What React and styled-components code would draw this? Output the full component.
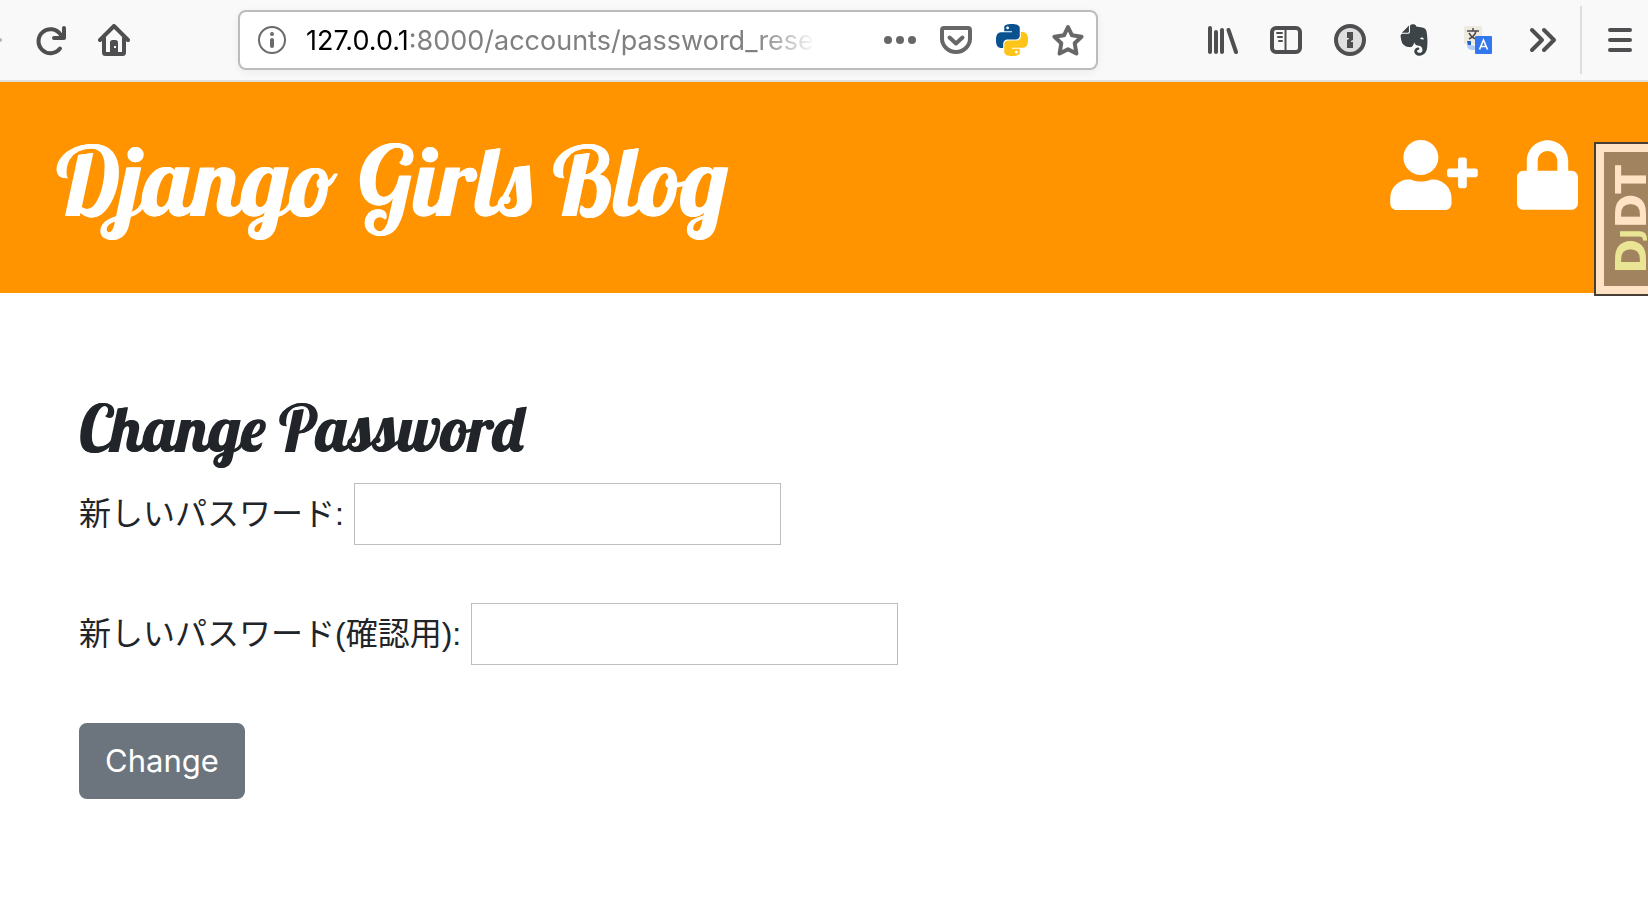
import React from "react";
import styled, { createGlobalStyle } from "styled-components";
import { FaUserPlus, FaLock, FaEvernote } from "react-icons/fa";

const GlobalStyle = createGlobalStyle`
  *, *::before, *::after { box-sizing: border-box; }
  html { overflow-x: hidden; }
  body {
    margin: 0;
    background: #fff;
    color: #212529;
    font-family: "Liberation Sans", "Noto Sans CJK JP", sans-serif;
    font-size: 32px;
    line-height: 48px;
  }
`;

const Toolbar = styled.nav`
  display: flex;
  align-items: center;
  height: 82px;
  background: #f9f9f9;
  border-bottom: 2px solid #e0e0e1;
`;

const BackEdge = styled.span`
  flex: none;
  width: 2px;
  height: 4px;
  margin-right: 16px;
  border-radius: 0 2px 2px 0;
  background: #b4b4b5;
`;

const ToolButton = styled.button`
  flex: none;
  display: flex;
  align-items: center;
  justify-content: center;
  width: ${(p) => p.$width || 64}px;
  height: 56px;
  padding: 0;
  border: 0;
  background: none;
  color: ${(p) => p.$color || "#4f4f51"};
  cursor: pointer;

  svg { display: block; width: 32px; height: 32px; }
`;

const AddressBar = styled.div`
  flex: 1;
  min-width: 0;
  display: flex;
  align-items: center;
  height: 60px;
  margin: 0 92px;
  border: 2px solid #bcbcbd;
  border-radius: 8px;
  background: #fff;
  box-shadow: 0 2px 8px rgba(0, 0, 0, 0.06);
`;

const Address = styled.div`
  flex: 1;
  min-width: 0;
  margin: 2px 56px 0 2px;
  overflow: hidden;
  white-space: nowrap;
  font-family: Inter, "Liberation Sans", sans-serif;
  font-size: 27px;
  line-height: 40px;
  color: #808080;
  mask-image: linear-gradient(to left, transparent, #000 60px);
`;

const Host = styled.span`
  color: #000;
`;

const Divider = styled.span`
  flex: none;
  width: 2px;
  height: 68px;
  margin: 0 10px 0 6px;
  background: #dededf;
`;

const PageHeader = styled.header`
  display: flex;
  justify-content: space-between;
  align-items: flex-start;
  height: 211px;
  padding: 58px 70px 0 56px;
  background: #ff9400;
`;

const SiteTitle = styled.h1`
  margin: 0;
  font-family: Lobster, "Liberation Serif", serif;
  font-size: 96px;
  font-weight: 400;
  line-height: 80px;
  text-shadow: 1px 0 0 #fff;

  a { color: #fff; text-decoration: none; }
`;

const Actions = styled.div`
  display: flex;
  gap: 39px;
`;

const ActionLink = styled.a`
  color: #fff;

  svg { display: block; width: ${(p) => p.$width}px; height: 70px; }
`;

const Main = styled.main`
  padding: 100px 79px 64px;
`;

const Heading = styled.h2`
  margin: 0 0 20px;
  font-family: Lobster, "Liberation Serif", serif;
  font-size: 64px;
  font-weight: 400;
  line-height: 70px;
  text-shadow: 1px 0 0 currentColor;
`;

const Form = styled.form`
  display: flex;
  flex-direction: column;
  align-items: flex-start;
  gap: 58px;
`;

const Field = styled.div`
  display: flex;
  align-items: center;
  gap: 10px;
`;

const PasswordInput = styled.input`
  width: 427px;
  height: 62px;
  padding: 0 8px;
  border: 1px solid #bdbdbd;
  background: #fff;
  font: inherit;
`;

const SubmitButton = styled.button`
  padding: 12px 24px;
  border: 2px solid #6c757d;
  border-radius: 8px;
  background: #6c757d;
  color: #fff;
  font-family: Inter, "Liberation Sans", sans-serif;
  font-size: 31px;
  line-height: 48px;
  cursor: pointer;
`;

const DebugHandle = styled.button`
  position: fixed;
  top: 142px;
  right: 0;
  width: 54px;
  height: 154px;
  padding: 8px 0 8px 8px;
  border: 2px solid rgba(0, 0, 0, 0.72);
  border-right: 0;
  background: #ffe3c4;
  cursor: pointer;
`;

const DebugFace = styled.span`
  display: flex;
  align-items: center;
  justify-content: flex-end;
  height: 134px;
  background: #a1845f;
  color: #ffe3c4;
`;

const DebugLabel = styled.span`
  writing-mode: vertical-rl;
  transform: rotate(180deg);
  font-family: "DejaVu Sans", sans-serif;
  font-size: 42px;
  font-weight: 700;
  line-height: 32px;
`;

const DebugAccent = styled.span`
  color: #eae595;

  small { font-size: 28px; }
`;

const stroke = {
  fill: "none",
  stroke: "currentColor",
  strokeLinecap: "round",
  strokeLinejoin: "round",
};

const ReloadIcon = () => (
  <svg viewBox="0 0 32 32" {...stroke} strokeWidth="4">
    <path d="M26 24.6A12 12 0 1 1 26.5 10.5" />
    <path d="M30 4v10H20" />
    <path d="M30 8v6h-6z" fill="currentColor" strokeWidth="1" />
  </svg>
);

const HomeIcon = () => (
  <svg viewBox="0 0 32 32" {...stroke} strokeWidth="4">
    <path d="M2 16 16 2l14 14" />
    <path d="M6 14v14.5q0 1.5 1.5 1.5h17q1.5 0 1.5-1.5V14" />
    <path fillRule="evenodd" fill="currentColor" stroke="none" d="M12 29V18.5q0-2.5 2.5-2.5h3q2.5 0 2.5 2.5V29zM16 22v2h2v-2z" />
  </svg>
);

const InfoIcon = () => (
  <svg viewBox="0 0 32 32" {...stroke} strokeWidth="2">
    <circle cx="16" cy="16" r="13" />
    <circle cx="16" cy="10" r="2" fill="currentColor" stroke="none" />
    <path d="M16 16v6" strokeWidth="4" />
  </svg>
);

const DotsIcon = () => (
  <svg viewBox="0 0 32 32" fill="currentColor">
    <circle cx="4" cy="16" r="4" />
    <circle cx="16" cy="16" r="4" />
    <circle cx="28" cy="16" r="4" />
  </svg>
);

const PocketIcon = () => (
  <svg viewBox="0 0 32 32" {...stroke} strokeWidth="4">
    <path d="M4 4h24q2 0 2 2v8.5a14 13.5 0 0 1-28 0V6q0-2 2-2z" />
    <path d="m9.5 13.5 6.5 6 6.5-6" />
  </svg>
);

const PythonIcon = () => (
  <svg viewBox="0 0 24 24">
    <path
      fill="#0a5190"
      d="M14.25.18l.9.2.73.26.59.3.45.32.34.34.25.34.16.33.1.3.04.26.02.2-.01.13V8.5l-.05.63-.13.55-.21.46-.26.38-.3.31-.33.25-.35.19-.35.14-.33.1-.3.07-.26.04-.21.02H8.77l-.69.05-.59.14-.5.22-.41.27-.33.32-.27.35-.2.36-.15.37-.1.35-.07.32-.04.27-.02.21v3.06H3.17l-.21-.03-.28-.07-.32-.12-.35-.18-.36-.26-.36-.36-.35-.46-.32-.59-.28-.73-.21-.88-.14-1.05-.05-1.23.06-1.22.16-1.04.24-.87.32-.71.36-.57.4-.44.42-.33.42-.24.4-.16.36-.1.32-.05.24-.01h.16l.06.01h8.16v-.83H6.18l-.01-2.75-.02-.37.05-.34.11-.31.17-.28.25-.26.31-.23.38-.2.44-.18.51-.15.58-.12.64-.1.71-.06.77-.04.84-.02 1.27.05zm-6.3 1.98l-.23.33-.08.41.08.41.23.34.33.22.41.09.41-.09.33-.22.23-.34.08-.41-.08-.41-.23-.33-.33-.22-.41-.09-.41.09z"
    />
    <path
      fill="#ffc41a"
      d="M21.04 6.11l.28.06.32.12.35.18.36.27.36.35.35.47.32.59.28.73.21.88.14 1.04.05 1.23-.06 1.23-.16 1.04-.24.86-.32.71-.36.57-.4.45-.42.33-.42.24-.4.16-.36.09-.32.05-.24.02-.16-.01h-8.22v.82h5.84l.01 2.76.02.36-.05.34-.11.31-.17.29-.25.25-.31.24-.38.2-.44.17-.51.15-.58.13-.64.09-.71.07-.77.04-.84.01-1.27-.04-1.07-.14-.9-.2-.73-.25-.59-.3-.45-.33-.34-.34-.25-.34-.16-.33-.1-.3-.04-.25-.02-.2.01-.13v-5.34l.05-.64.13-.54.21-.46.26-.38.3-.32.33-.24.35-.2.35-.14.33-.1.3-.06.26-.04.21-.02.13-.01h5.84l.69-.05.59-.14.5-.21.41-.28.33-.32.27-.35.2-.36.15-.36.1-.35.07-.32.04-.28.02-.21V6.07h2.09l.14.01zm-6.47 14.25l-.23.33-.08.41.08.41.23.33.33.23.41.08.41-.08.33-.23.23-.33.08-.41-.08-.41-.23-.33-.33-.23-.41-.08-.41.08z"
    />
  </svg>
);

const StarIcon = () => (
  <svg viewBox="0 0 32 32" {...stroke} strokeWidth="4">
    <path d="m16 3 4 8.3 9.5 1.4-6.8 6.5 1.7 10.3L16 25.2l-8.4 4.3 1.7-10.3-6.8-6.5 9.5-1.4z" />
  </svg>
);

const LibraryIcon = () => (
  <svg viewBox="-2 0 32 32" {...stroke} strokeWidth="4">
    <path d="M2 4v24M8 8v20M14 6v22M20.5 6 28 28" />
  </svg>
);

const SidebarIcon = () => (
  <svg viewBox="0 0 32 32" {...stroke} strokeWidth="4">
    <rect x="2" y="4" width="28" height="24" rx="4" />
    <path d="M15.5 4v24" strokeWidth="2" />
    <path d="M7 9h5M8 13h4M9 17h3" strokeWidth="2" />
  </svg>
);

const KeyholeIcon = () => (
  <svg viewBox="0 0 32 32">
    <circle cx="16" cy="16" r="14" fill="#dfdfdf" stroke="currentColor" strokeWidth="4" />
    <path d="M13 8h6v8l-2 1v1h2v6h-6v-8l2-1v-1h-2z" fill="currentColor" />
  </svg>
);

const EvernoteIcon = styled(FaEvernote)`
  && { width: 36px; height: 36px; }
  color: #3c4447;
  stroke: #fff;
  stroke-width: 28px;
  paint-order: stroke;
  overflow: visible;
`;

const TranslateIcon = () => (
  <svg viewBox="0 0 32 32" fill="none">
    <rect x="2" y="2" width="18" height="18" rx="1" fill="#eeeae0" />
    <path d="M5 7h12M11 4v3M7 15q6-3 7-8M7 9q3 5 7 6" stroke="#4b4b4b" strokeWidth="1.5" />
    <path d="M5 17h4v4l5 1v4H9q-4-1-4-5z" fill="#b3cbf5" />
    <path d="M5 17h4v4H6z" fill="#2462c4" />
    <rect x="13" y="12" width="17" height="18" rx="1" fill="#3377ee" />
    <path d="m17.5 25.5 4-9.5 4 9.5M19 22.5h5" stroke="#fff" strokeWidth="1.6" />
  </svg>
);

const OverflowIcon = () => (
  <svg viewBox="-2 0 32 32" {...stroke} strokeWidth="4">
    <path d="M4 6l10 10L4 26M16 6l10 10-10 10" />
  </svg>
);

const MenuIcon = () => (
  <svg viewBox="0 0 32 32" {...stroke} strokeWidth="4">
    <path d="M6 6h20M6 16h20M6 26h20" />
  </svg>
);

const extensions = [
  ["Library", LibraryIcon],
  ["Sidebars", SidebarIcon],
  ["Password manager", KeyholeIcon],
  ["Web clipper", EvernoteIcon],
  ["Translate", TranslateIcon],
  ["More tools", OverflowIcon],
];

const pageActions = [
  ["Page actions", DotsIcon],
  ["Save to Pocket", PocketIcon],
  ["Python", PythonIcon],
  ["Bookmark", StarIcon],
];

const fields = [
  ["new_password1", "新しいパスワード:"],
  ["new_password2", "新しいパスワード(確認用):"],
];

export default function App() {
  return (
    <>
      <GlobalStyle />
      <Toolbar aria-label="Browser toolbar">
        <BackEdge />
        <ToolButton aria-label="Reload"><ReloadIcon /></ToolButton>
        <ToolButton aria-label="Home"><HomeIcon /></ToolButton>
        <AddressBar>
          <ToolButton $color="#6a6a6a" aria-label="Site information"><InfoIcon /></ToolButton>
          <Address><Host>127.0.0.1</Host>:8000/accounts/password_rese</Address>
          {pageActions.map(([label, Icon]) => (
            <ToolButton key={label} $width={56} $color="#676767" aria-label={label}><Icon /></ToolButton>
          ))}
        </AddressBar>
        {extensions.map(([label, Icon]) => (
          <ToolButton key={label} aria-label={label}><Icon /></ToolButton>
        ))}
        <Divider />
        <ToolButton $width={56} aria-label="Menu"><MenuIcon /></ToolButton>
      </Toolbar>

      <PageHeader>
        <SiteTitle><a href="#home">Django Girls Blog</a></SiteTitle>
        <Actions>
          <ActionLink $width={88} href="#signup" aria-label="Sign up"><FaUserPlus /></ActionLink>
          <ActionLink $width={61} href="#login" aria-label="Log in"><FaLock /></ActionLink>
        </Actions>
      </PageHeader>

      <Main>
        <Heading>Change Password</Heading>
        <Form onSubmit={(e) => e.preventDefault()}>
          {fields.map(([id, label]) => (
            <Field key={id}>
              <label htmlFor={id}>{label}</label>
              <PasswordInput id={id} name={id} type="password" autoComplete="new-password" />
            </Field>
          ))}
          <SubmitButton type="submit">Change</SubmitButton>
        </Form>
      </Main>

      <DebugHandle aria-label="Show debug toolbar">
        <DebugFace>
          <DebugLabel><DebugAccent>D<small>J</small></DebugAccent>DT</DebugLabel>
        </DebugFace>
      </DebugHandle>
    </>
  );
}
